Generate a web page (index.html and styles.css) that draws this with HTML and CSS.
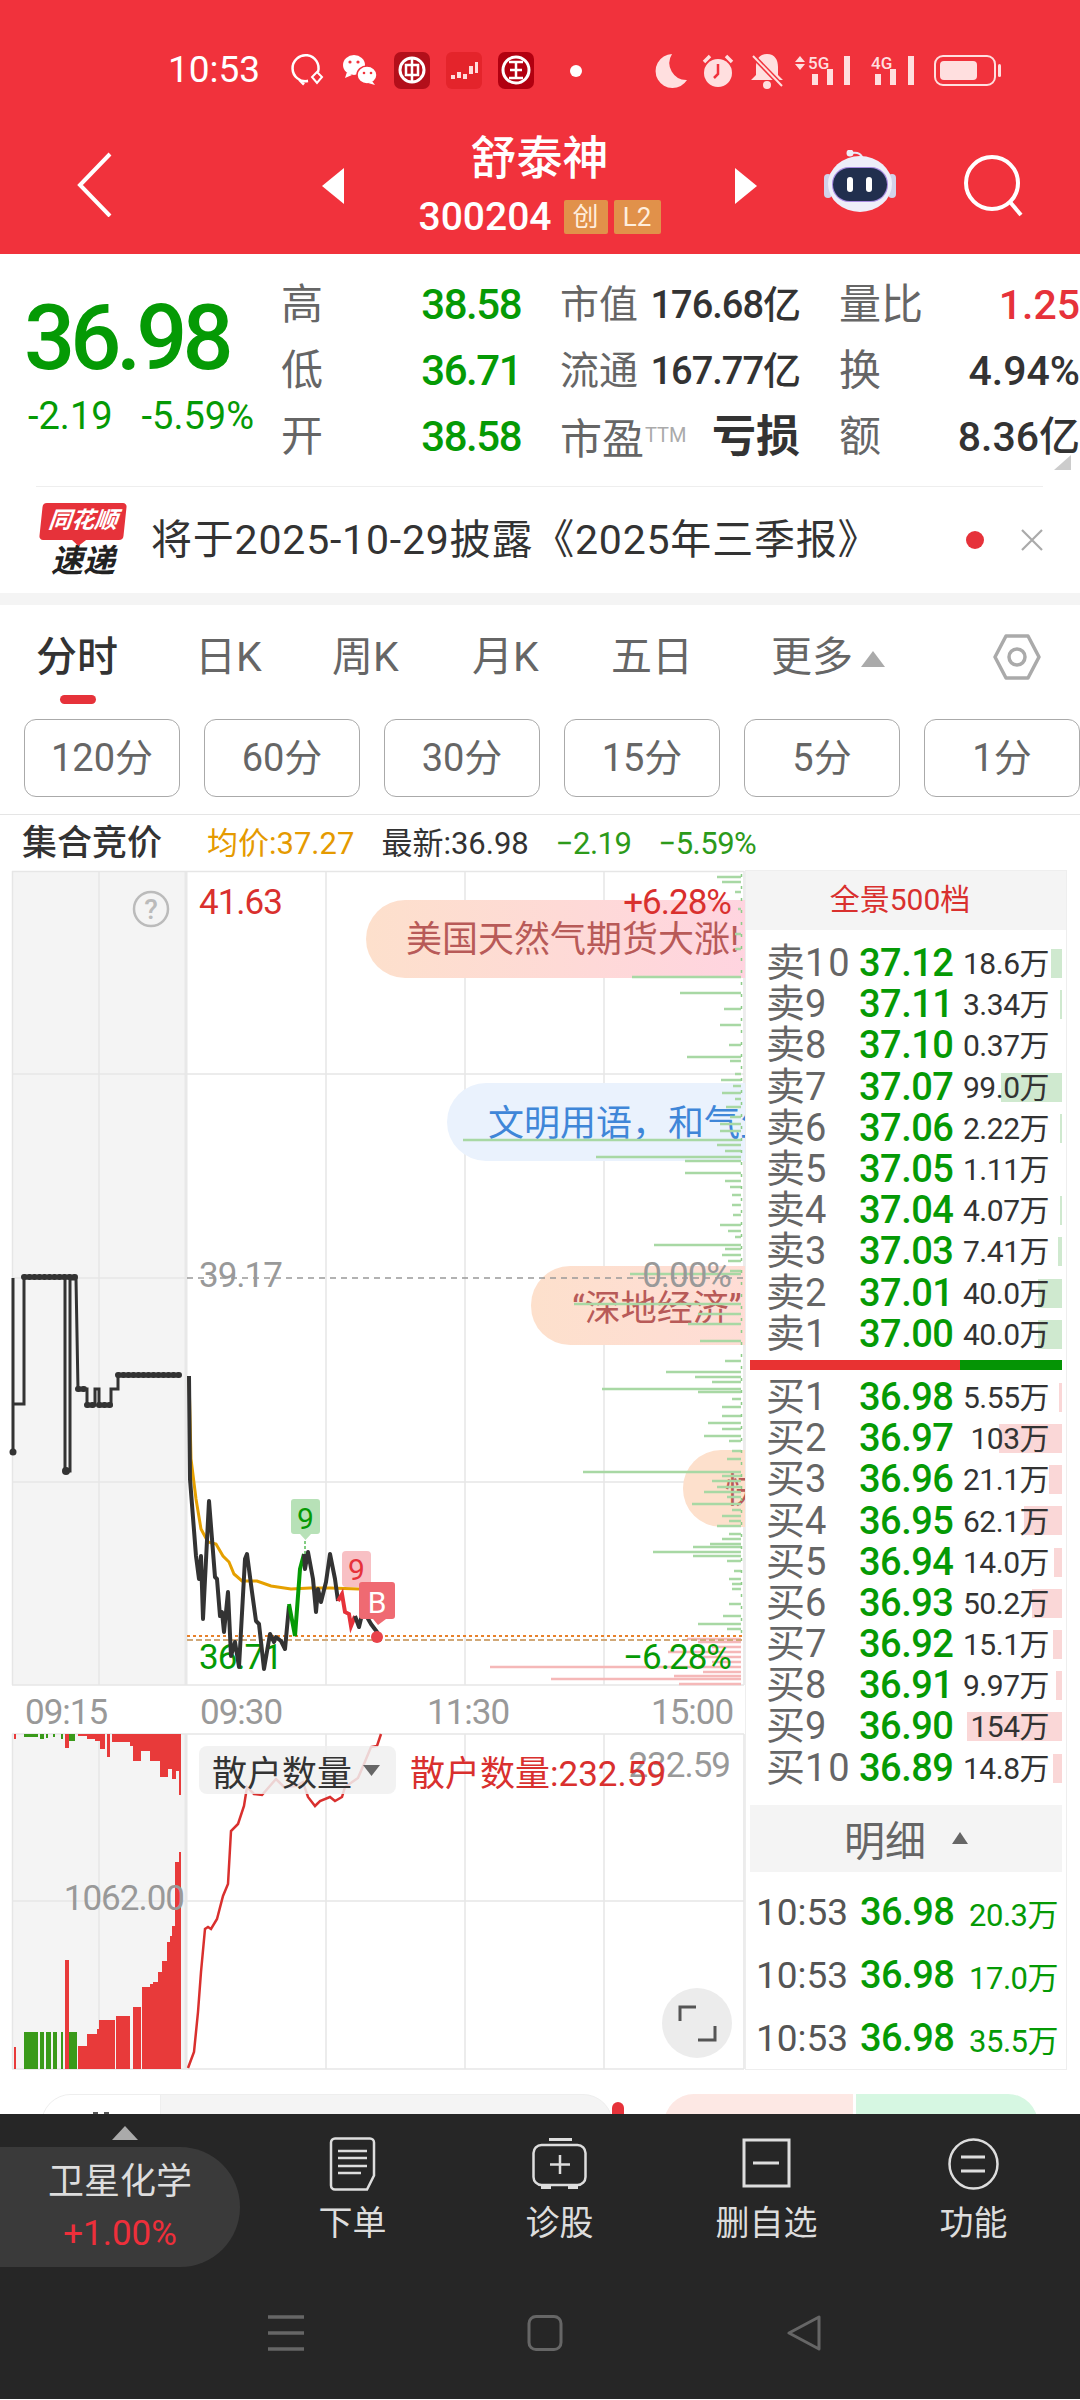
FILE: index.html
```html
<!DOCTYPE html>
<html lang="zh-CN">
<head>
    <meta charset="UTF-8">
    <meta name="viewport" content="width=device-width, initial-scale=1.0">
    <title>舒泰神 300204</title>
    <link rel="stylesheet" href="styles.css">
</head>
<body>
    <!-- Red header: status bar and stock title -->
    <header class="header">
        <div class="status">
            <span class="status-time">10:53</span>
            <svg class="status-apps" viewBox="291 50 291 40">
                <path d="M318 72a13 13 0 1 0-10 9l-7 .5 3 3" fill="none" stroke="#fff" stroke-width="2.5"/>
                <path d="M317 72l5 5-5 6-5-6z" fill="none" stroke="#fff" stroke-width="2"/>
                <ellipse cx="354" cy="65" rx="11" ry="10" fill="#fff"/>
                <path d="M347 72l-2 6 7-3z" fill="#fff"/>
                <circle cx="350" cy="62" r="1.6" fill="#f1323c"/>
                <circle cx="358" cy="62" r="1.6" fill="#f1323c"/>
                <ellipse cx="367" cy="75" rx="10" ry="9" fill="#fff" stroke="#f1323c" stroke-width="1.5"/>
                <path d="M372 81l3 4-7-2z" fill="#fff"/>
                <circle cx="364" cy="73" r="1.3" fill="#f1323c"/>
                <circle cx="371" cy="73" r="1.3" fill="#f1323c"/>
                <rect x="394" y="52" width="36" height="37" rx="7" fill="#b30f1a"/>
                <circle cx="412" cy="70" r="12" fill="none" stroke="#fff" stroke-width="3"/>
                <rect x="406" y="65" width="12" height="10" fill="none" stroke="#fff" stroke-width="2.5"/>
                <path d="M412 58v24" stroke="#fff" stroke-width="2.5"/>
                <rect x="446" y="52" width="36" height="37" rx="6" fill="#e4242b"/>
                <path d="M451 75h4v4h-4zM457 72h4v6h-4zM463 74h4v5h-4zM469 66h4v8h-4zM475 62h3v11h-3z" fill="#ffdcdc"/>
                <rect x="498" y="52" width="36" height="37" rx="7" fill="#b10010"/>
                <circle cx="516" cy="70" r="13" fill="none" stroke="#fff" stroke-width="3"/>
                <path d="M509 62h14M509 78h14M516 62v16M510 70h12" stroke="#fff" stroke-width="2.5" fill="none"/>
                <circle cx="576" cy="71" r="6" fill="#fff"/>
            </svg>
            <svg class="status-sys" viewBox="654 50 348 40">
                <path d="M672 54a17 17 0 1 0 15 26 17 17 0 0 1-15-26z" fill="#ffdfdf"/>
                <circle cx="718" cy="73" r="14" fill="#ffdfdf"/>
                <path d="M704 62l6-6M732 62l-6-6" stroke="#ffdfdf" stroke-width="3.5"/>
                <path d="M718 64v10l-4 4" stroke="#f1323c" stroke-width="2.5" fill="none"/>
                <path d="M767 54c-8 0-11 6-11 13v8l-5 5h32l-5-5v-8c0-7-3-13-11-13z" fill="#ffdfdf"/>
                <circle cx="767" cy="85" r="4" fill="#ffdfdf"/>
                <path d="M753 56l29 30" stroke="#f1323c" stroke-width="5"/>
                <path d="M753 56l29 30" stroke="#ffdfdf" stroke-width="2"/>
                <path d="M800 56l5 6h-10zM800 70l5-6h-10z" fill="#ffdfdf"/>
                <text class="net-text" x="808" y="69">5G</text>
                <path d="M812 74h6v11h-6zM827 69h6v16h-6zM844 56h6v29h-6z" fill="#ffdfdf"/>
                <text class="net-text" x="871" y="69">4G</text>
                <path d="M875 74h6v11h-6zM890 69h6v16h-6zM908 56h6v29h-6z" fill="#ffdfdf"/>
                <rect x="935" y="56" width="60" height="29" rx="8" fill="none" stroke="#ffdfdf" stroke-width="2"/>
                <rect x="940" y="61" width="37" height="19" rx="4" fill="#ffdfdf"/>
                <rect x="998" y="64" width="3" height="13" rx="1.5" fill="#ffdfdf"/>
            </svg>
        </div>
        <div class="titlebar">
            <svg class="back" viewBox="0 0 35 65"><path d="M33 2L3 33l30 31" fill="none" stroke="#fff" stroke-width="4"/></svg>
            <span class="arrow arrow-left"></span>
            <div class="title">
                <div class="title-name">舒泰神</div>
                <div class="title-code">300204<span class="tag tag-first">创</span><span class="tag">L2</span></div>
            </div>
            <span class="arrow arrow-right"></span>
            <svg class="robot" viewBox="0 0 72 68">
                <path d="M28 3c6-1 10 1 11 7" fill="none" stroke="#e8e8f5" stroke-width="2"/>
                <circle cx="26" cy="3" r="3.5" fill="#eeeef8"/>
                <rect x="0" y="24" width="8" height="24" rx="4" fill="#d2d2ea"/>
                <rect x="64" y="24" width="8" height="24" rx="4" fill="#d2d2ea"/>
                <ellipse cx="36" cy="34" rx="32" ry="28" fill="#eeeef9"/>
                <rect x="8" y="17" width="56" height="35" rx="17" fill="#a78be0"/>
                <rect x="9" y="18" width="54" height="33" rx="16.5" fill="#212f4e"/>
                <rect x="23" y="27" width="6" height="15" rx="3" fill="#fff"/>
                <rect x="42" y="27" width="6" height="15" rx="3" fill="#fff"/>
            </svg>
            <svg class="search" viewBox="0 0 60 62">
                <circle cx="28" cy="28" r="26" fill="none" stroke="#fff" stroke-width="4"/>
                <path d="M46 47l11 13" stroke="#fff" stroke-width="4"/>
            </svg>
        </div>
    </header>

    <!-- Quote summary -->
    <section class="quote">
        <div class="quote-price">
            <div class="price-big">36.98</div>
            <div class="price-change"><span>-2.19</span><span>-5.59%</span></div>
        </div>
        <div class="stats">
            <div class="stat"><span class="stat-name">高</span><b class="green">38.58</b></div>
            <div class="stat"><span class="stat-name stat-name-sm">市值</span><b>176.68亿</b></div>
            <div class="stat"><span class="stat-name">量比</span><b class="red wide">1.25</b></div>
            <div class="stat"><span class="stat-name">低</span><b class="green">36.71</b></div>
            <div class="stat"><span class="stat-name stat-name-sm">流通</span><b>167.77亿</b></div>
            <div class="stat"><span class="stat-name">换</span><b class="wide">4.94%</b></div>
            <div class="stat"><span class="stat-name">开</span><b class="green">38.58</b></div>
            <div class="stat"><span class="stat-name">市盈<span class="ttm">TTM</span></span><b class="loss">亏损</b></div>
            <div class="stat"><span class="stat-name">额</span><b class="wide">8.36亿</b></div>
        </div>
        <span class="corner"></span>
    </section>

    <section class="news">
        <div class="news-logo">
            <div class="logo-top">同花顺</div>
            <div class="logo-bottom">速递</div>
        </div>
        <div class="news-text">将于2025-10-29披露《2025年三季报》</div>
        <span class="news-dot"></span>
        <svg class="news-close" viewBox="0 0 22 22"><path d="M1 1l20 20M21 1L1 21" stroke="#aaa" stroke-width="2.2"/></svg>
    </section>

    <!-- Period tabs -->
    <nav class="tabs">
        <span class="tab tab-active">分时</span>
        <span class="tab">日K</span>
        <span class="tab">周K</span>
        <span class="tab">月K</span>
        <span class="tab">五日</span>
        <span class="tab">更多<i class="tab-more"></i></span>
        <svg class="tab-gear" viewBox="0 0 48 46">
            <path d="M13 2h22l11 21-11 21H13L2 23z" fill="none" stroke="#aaa" stroke-width="3.5" stroke-linejoin="round"/>
            <circle cx="24" cy="23" r="8" fill="none" stroke="#aaa" stroke-width="3.5"/>
        </svg>
    </nav>
    <div class="periods">
        <span class="period">120分</span>
        <span class="period">60分</span>
        <span class="period">30分</span>
        <span class="period">15分</span>
        <span class="period">5分</span>
        <span class="period">1分</span>
    </div>

    <div class="info">
        <span class="info-title">集合竞价</span>
        <span class="info-avg">均价:37.27</span>
        <span class="info-last">最新:36.98</span>
        <span class="info-down">−2.19</span>
        <span class="info-down">−5.59%</span>
    </div>

    <main class="market">
        <!-- Intraday chart drawn on page coordinates -->
        <svg class="chart" viewBox="0 871 745 1200">
            <defs>
                <linearGradient id="bubbleWarm" x1="0" x2="1" y1="0" y2="0">
                    <stop offset="0" stop-color="#fde0cc"/>
                    <stop offset="1" stop-color="#ffd3e2"/>
                </linearGradient>
                <linearGradient id="bubbleSoft" x1="0" x2="1" y1="0" y2="0">
                    <stop offset="0" stop-color="#fde0cc"/>
                    <stop offset="1" stop-color="#ffdcd8"/>
                </linearGradient>
            </defs>

            <rect x="12" y="872" width="175" height="814" fill="#f4f4f4"/>
            <rect x="12" y="1735" width="175" height="335" fill="#f4f4f4"/>
            <path class="grid-thick" d="M186 872V1686M186 1735V2070"/>
            <path class="grid" d="M12.5 872V1686M12.5 1735V2070M99 872V1686M99 1735V2070M326 872V1686M326 1735V2070M465 872V1686M465 1735V2070M604 872V1686M604 1735V2070M744 872V1686M744 1735V2070"/>
            <path class="grid" d="M12 872.5H744M12 1075H744M12 1279H187M12 1483H744M12 1686H744M12 1735H744M12 1902H744M12 2070H744"/>

            <rect x="366" y="901" width="420" height="78" rx="39" fill="url(#bubbleWarm)"/>
            <text class="bubble-red" x="406" y="953">美国天然气期货大涨!</text>
            <rect x="447" y="1084" width="340" height="78" rx="39" fill="#eaf2fd"/>
            <text class="bubble-blue" x="488" y="1137">文明用语，和气生财</text>
            <rect x="531" y="1267" width="260" height="79" rx="39" fill="url(#bubbleSoft)"/>
            <text class="bubble-red" x="572" y="1322">“深地经济”</text>
            <rect x="683" y="1451" width="120" height="77" rx="38" fill="#fde0cc"/>
            <text class="bubble-red" x="725" y="1504">快讯</text>

            <!-- Volume at price -->
            <path class="depth-green" d="M741 878H717M741 883H722M741 893H735M741 910H738M741 935H735M741 950H735M741 978H632M741 994H680M741 1010H724M741 1026H720M741 1046H729M741 1058H687M741 1062H730M741 1075H735M741 1081H721M741 1087H733M741 1094H722M741 1100H735M741 1108H726M741 1118H730M741 1125H720M741 1132H720M741 1141H463M741 1146H717M741 1152H725M741 1158H596M741 1162H685M741 1174H685M741 1182H725M741 1188H730M741 1196H732M741 1206H732M741 1216H733M741 1226H720M741 1232H728M741 1238H735M741 1246H654M741 1250H725M741 1256H722M741 1262H728M741 1272H730M741 1275H630M741 1305H574M741 1315H698M741 1325H688M741 1342H700M741 1362H725M741 1373H666M741 1378H695M741 1383H712M741 1390H602M741 1393H698M741 1400H732M741 1408H722M741 1417H722M741 1424H708M741 1430H722M741 1437H704M741 1442H729M741 1452H732M741 1460H727M741 1473H583M741 1477H722M741 1482H712M741 1488H717M741 1493H704M741 1498H727M741 1505H692M741 1511H732M741 1517H722M741 1522H729M741 1527H717M741 1535H729M741 1540H722M741 1545H710M741 1548H693M741 1553H653M741 1557H693M741 1562H727M741 1572H734M741 1580H729M741 1585H732M741 1590H732M741 1605H729M741 1617H723M741 1625H698M741 1630H727"/>
            <path class="depth-red" d="M741 1640H687M741 1643H698M741 1648H712M741 1653H668M741 1658H698M741 1663H712M741 1668H490M741 1673H703M741 1677H674M741 1680H551M741 1685H679"/>
            <path class="depth-dash" d="M741.5 875V1640"/>

            <path class="ref-line" d="M187 1279H744"/>
            <path class="ref-dots" d="M187 1637H744"/>
            <path class="ref-tan" d="M187 1641H744"/>

            <text class="axis-red" x="199" y="915">41.63</text>
            <text class="axis-red axis-end" x="731" y="915">+6.28%</text>
            <text class="axis-gray" x="199" y="1288">39.17</text>
            <text class="axis-gray axis-end" x="731" y="1288">0.00%</text>
            <text class="axis-green" x="199" y="1670">36.71</text>
            <text class="axis-green axis-end" x="731" y="1670">−6.28%</text>

            <circle cx="151" cy="910" r="17" fill="none" stroke="#bbb" stroke-width="2.5"/>
            <text class="help" x="151" y="920">?</text>

            <!-- Auction and session price lines -->
            <path class="line-auction" d="M13 1453V1279M13 1453V1405H24V1278H65V1472H70V1280H76L78 1390H87V1406H95V1390H99V1406H111V1390H118V1376H180"/>
            <path class="line-auction-dots" d="M24 1278H76M78 1390H87M87 1406H95M99 1406H111M118 1376H180"/>
            <circle cx="13" cy="1453" r="3.5" fill="#333"/>
            <circle cx="66" cy="1472" r="4" fill="#333"/>
            <polyline class="line-avg" points="189,1377 191,1460 196,1500 201,1530 208,1543 216,1545 223,1557 229,1563 234,1575 242,1582 257,1582 271,1587 291,1590 310,1589 330,1589 359,1590"/>
            <polyline class="line-price" points="189,1377 190,1480 196,1557 199,1580 201,1557 203,1620 209,1502 215,1578 217,1580 220,1617 222,1613 224,1633 228,1593 231,1657 235,1643 239,1668 245,1560 247,1555 252,1593 256,1622 259,1625 264,1670 270,1635 274,1643 276,1638 281,1642 285,1650 289,1607"/>
            <polyline class="line-up" points="289,1605 295,1637 300,1570 304,1555"/>
            <polyline class="line-price" points="304,1555 305,1570 308,1553 313,1580 316,1613 318,1590 321,1603 326,1583 330,1555 335,1580 338,1602"/>
            <polyline class="line-down" points="338,1602 342,1595 345,1613 349,1615 351,1627 355,1617"/>
            <polyline class="line-price" points="355,1617 359,1628 364,1607 367,1618 371,1625 377,1633 380,1642"/>

            <path d="M305 1542V1555" stroke="#059a05" stroke-width="1" stroke-dasharray="3 2"/>
            <path d="M294 1500h23a3 3 0 0 1 3 3v29a3 3 0 0 1-3 3h-6l-5.5 6-5.5-6h-6a3 3 0 0 1-3-3v-29a3 3 0 0 1 3-3z" fill="#b7e1b7"/>
            <text class="mark-green" x="305.5" y="1530">9</text>
            <rect x="342" y="1552" width="29" height="36" rx="4" fill="#f8c0c4"/>
            <text class="mark-red" x="356.5" y="1581">9</text>
            <path d="M356 1595V1612" stroke="#fff" stroke-width="1.5" stroke-dasharray="3 2"/>
            <path d="M362 1583h30a3 3 0 0 1 3 3v31a3 3 0 0 1-3 3h-6l-8 6-5-6h-11a3 3 0 0 1-3-3v-31a3 3 0 0 1 3-3z" fill="#ef6a72"/>
            <text class="mark-white" x="377" y="1614">B</text>
            <circle cx="377" cy="1638" r="6" fill="#e8434a"/>

            <text class="axis-time" x="25" y="1725">09:15</text>
            <text class="axis-time" x="200" y="1725">09:30</text>
            <text class="axis-time" x="427" y="1725">11:30</text>
            <text class="axis-time" x="651" y="1725">15:00</text>

            <!-- Auction volume bars, lower pane -->
            <path class="bar-red" d="M14 2048h2v22h-2zM65 1961h4v109h-4zM78 2047h9v23h-9zM87 2035h10v35H87zM97 2030h2v40h-2zM99 2021h16v49H99zM116 2017h14v53h-14zM133 2008h8v62h-8zM142 1988h8v82h-8zM150 1985h3v85h-3zM153 1983h5v87h-5zM158 1973h4v97h-4zM162 1962h5v108h-5zM167 1943h3v127h-3zM170 1937h2v133h-2zM172 1927h3v143h-3zM175 1863h4v207h-4zM179 1853h2v217h-2z"/>
            <path class="bar-green" d="M24 2033h14v37H24zM40 2033h4v37h-4zM46 2033h5v37h-5zM53 2033h4v37h-4zM61 2033h2v37h-2zM69 2033h8v37h-8z"/>
            <path class="bar-red" d="M14 1735h2v5h-2zM65 1735h4v14h-4zM78 1735h9v2h-9zM87 1735h8v5h-8zM95 1735h5v7h-5zM100 1735h5v15h-5zM107 1735h3v23h-3zM112 1735h18v8h-18zM130 1735h3v12h-3zM133 1735h8v27h-8zM141 1735h9v17h-9zM150 1735h10v27h-10zM160 1735h8v43h-8zM168 1735h4v35h-4zM172 1735h4v45h-4zM176 1735h3v37h-3zM179 1735h2v61h-2z"/>
            <path class="bar-green" d="M24 1735h14v3H24zM40 1735h4v5h-4zM46 1735h2v4h-2zM53 1735h2v3h-2zM61 1735h2v5h-2zM69 1735h6v7h-6z"/>
            <polyline class="line-turnover" points="188,2069 194,2053 198,2013 201,1973 205,1930 208,1928 211,1930 217,1920 223,1897 228,1885 231,1832 238,1825 244,1807 247,1788 254,1795 262,1796 269,1788 276,1780 284,1788 296,1787 303,1783 308,1798 315,1807 320,1802 330,1798 335,1802 342,1798 345,1788 358,1779 364,1765 371,1748 377,1747 381,1735"/>

            <rect x="199" y="1747" width="197" height="48" rx="8" fill="#f0f0f0" fill-opacity="0.85"/>
            <text class="pane-select" x="212" y="1787">散户数量</text>
            <path d="M363 1766h17l-8.5 11z" fill="#666"/>
            <text class="axis-gray axis-end" x="730" y="1778">232.59</text>
            <text class="pane-value" x="410" y="1787">散户数量:232.59</text>
            <text class="axis-gray axis-end" x="184" y="1911">1062.00</text>

            <circle cx="697" cy="2024" r="35" fill="#ececec"/>
            <path d="M680 2022V2008H696M715 2027V2041H698" fill="none" stroke="#555" stroke-width="3"/>
        </svg>

        <!-- Order book -->
        <aside class="book">
            <div class="book-head">全景500档</div>
            <div class="levels">
                <div class="level"><i class="fill fill-sell" style="width:11px"></i><span class="level-name">卖<em>10</em></span><span class="level-price">37.12</span><span class="level-vol">18.6万</span></div>
                <div class="level"><i class="fill fill-sell" style="width:2px"></i><span class="level-name">卖<em>9</em></span><span class="level-price">37.11</span><span class="level-vol">3.34万</span></div>
                <div class="level"><span class="level-name">卖<em>8</em></span><span class="level-price">37.10</span><span class="level-vol">0.37万</span></div>
                <div class="level"><i class="fill fill-sell" style="width:61px"></i><span class="level-name">卖<em>7</em></span><span class="level-price">37.07</span><span class="level-vol">99.0万</span></div>
                <div class="level"><i class="fill fill-sell" style="width:2px"></i><span class="level-name">卖<em>6</em></span><span class="level-price">37.06</span><span class="level-vol">2.22万</span></div>
                <div class="level"><span class="level-name">卖<em>5</em></span><span class="level-price">37.05</span><span class="level-vol">1.11万</span></div>
                <div class="level"><i class="fill fill-sell" style="width:2px"></i><span class="level-name">卖<em>4</em></span><span class="level-price">37.04</span><span class="level-vol">4.07万</span></div>
                <div class="level"><i class="fill fill-sell" style="width:4px"></i><span class="level-name">卖<em>3</em></span><span class="level-price">37.03</span><span class="level-vol">7.41万</span></div>
                <div class="level"><i class="fill fill-sell" style="width:24px"></i><span class="level-name">卖<em>2</em></span><span class="level-price">37.01</span><span class="level-vol">40.0万</span></div>
                <div class="level"><i class="fill fill-sell" style="width:24px"></i><span class="level-name">卖<em>1</em></span><span class="level-price">37.00</span><span class="level-vol">40.0万</span></div>
            </div>
            <div class="split"><span class="split-buy" style="width:210px"></span><span class="split-sell"></span></div>
            <div class="levels levels-buy">
                <div class="level"><i class="fill fill-buy" style="width:3px"></i><span class="level-name">买<em>1</em></span><span class="level-price">36.98</span><span class="level-vol">5.55万</span></div>
                <div class="level"><i class="fill fill-buy" style="width:63px"></i><span class="level-name">买<em>2</em></span><span class="level-price">36.97</span><span class="level-vol">103万</span></div>
                <div class="level"><i class="fill fill-buy" style="width:13px"></i><span class="level-name">买<em>3</em></span><span class="level-price">36.96</span><span class="level-vol">21.1万</span></div>
                <div class="level"><i class="fill fill-buy" style="width:38px"></i><span class="level-name">买<em>4</em></span><span class="level-price">36.95</span><span class="level-vol">62.1万</span></div>
                <div class="level"><i class="fill fill-buy" style="width:8px"></i><span class="level-name">买<em>5</em></span><span class="level-price">36.94</span><span class="level-vol">14.0万</span></div>
                <div class="level"><i class="fill fill-buy" style="width:30px"></i><span class="level-name">买<em>6</em></span><span class="level-price">36.93</span><span class="level-vol">50.2万</span></div>
                <div class="level"><i class="fill fill-buy" style="width:9px"></i><span class="level-name">买<em>7</em></span><span class="level-price">36.92</span><span class="level-vol">15.1万</span></div>
                <div class="level"><i class="fill fill-buy" style="width:6px"></i><span class="level-name">买<em>8</em></span><span class="level-price">36.91</span><span class="level-vol">9.97万</span></div>
                <div class="level"><i class="fill fill-buy" style="width:95px"></i><span class="level-name">买<em>9</em></span><span class="level-price">36.90</span><span class="level-vol">154万</span></div>
                <div class="level"><i class="fill fill-buy" style="width:9px"></i><span class="level-name">买<em>10</em></span><span class="level-price">36.89</span><span class="level-vol">14.8万</span></div>
            </div>
            <div class="detail-head">明细<i class="detail-arrow"></i></div>
            <div class="trades">
                <div class="trade"><span class="trade-time">10:53</span><span class="trade-price">36.98</span><span class="trade-vol">20.3万</span></div>
                <div class="trade"><span class="trade-time">10:53</span><span class="trade-price">36.98</span><span class="trade-vol">17.0万</span></div>
                <div class="trade"><span class="trade-time">10:53</span><span class="trade-price">36.98</span><span class="trade-vol">35.5万</span></div>
            </div>
        </aside>
    </main>

    <!-- Top edge of the panel scrolled under the dock -->
    <div class="peek">
        <div class="peek-pill"><div class="peek-left"><i></i><i></i></div></div>
        <span class="peek-dot"></span>
        <span class="peek-buy"></span>
        <span class="peek-sell"></span>
    </div>

    <footer class="dock">
        <div class="dock-row">
            <div class="stock-switch">
                <span class="stock-arrow"></span>
                <div class="stock-pill">
                    <div class="stock-name">卫星化学</div>
                    <div class="stock-rate">+1.00%</div>
                </div>
            </div>
            <div class="actions">
                <div class="action">
                    <svg class="action-icon" viewBox="0 0 55 54">
                        <path d="M10 1.5h35a4 4 0 0 1 4 4v33l-7 14H10a4 4 0 0 1-4-4v-43a4 4 0 0 1 4-4z" fill="none" stroke="#ddd" stroke-width="2.5"/>
                        <path d="M13 14h29M13 21h29M13 29h29M13 36h23" stroke="#ddd" stroke-width="2.5"/>
                    </svg>
                    <span>下单</span>
                </div>
                <div class="action">
                    <svg class="action-icon" viewBox="0 0 55 54">
                        <path d="M17 2.5h23" stroke="#ddd" stroke-width="3"/>
                        <rect x="1.5" y="8" width="52" height="40" rx="8" fill="none" stroke="#ddd" stroke-width="2.5"/>
                        <path d="M18 27.5h20M28 18v19" stroke="#ddd" stroke-width="2.5"/>
                        <path d="M9 48h10v4H9zM36 48h10v4H36z" fill="#ddd"/>
                    </svg>
                    <span>诊股</span>
                </div>
                <div class="action">
                    <svg class="action-icon" viewBox="0 0 55 54">
                        <rect x="5" y="3" width="45" height="46" fill="none" stroke="#ddd" stroke-width="3"/>
                        <path d="M14 26h26" stroke="#ddd" stroke-width="3"/>
                    </svg>
                    <span>删自选</span>
                </div>
                <div class="action">
                    <svg class="action-icon" viewBox="0 0 55 54">
                        <ellipse cx="27.5" cy="27" rx="24" ry="24.5" fill="none" stroke="#ddd" stroke-width="2.5"/>
                        <path d="M15 20h24M15 34h24" stroke="#ddd" stroke-width="3"/>
                    </svg>
                    <span>功能</span>
                </div>
            </div>
        </div>
        <div class="sysnav">
            <svg class="sys-icon" viewBox="0 0 36 36"><path d="M0 2h36M0 18h36M0 34h36" stroke="#666" stroke-width="3.5"/></svg>
            <svg class="sys-icon" viewBox="0 0 36 36"><rect x="2" y="1.5" width="32" height="33" rx="7" fill="none" stroke="#666" stroke-width="3"/></svg>
            <svg class="sys-icon" viewBox="0 0 36 36"><path d="M33 2v32L3 18z" fill="none" stroke="#666" stroke-width="3" stroke-linejoin="round"/></svg>
        </div>
    </footer>
</body>
</html>
```

FILE: styles.css
```css
* {
    box-sizing: border-box;
}

html, body {
    margin: 0;
    padding: 0;
}

body {
    width: 1080px;
    height: 2400px;
    overflow: hidden;
    background: #fff;
    color: #333;
    font-family: Roboto, "Noto Sans CJK SC", sans-serif;
}

svg {
    display: block;
    flex: none;
}

/* Header */
.header {
    height: 254px;
    background: #f1323c;
    color: #fff;
}

.status {
    display: flex;
    align-items: center;
    height: 110px;
    padding: 30px 0 0 168px;
}

.status-time {
    width: 123px;
    font-size: 37px;
    line-height: 40px;
}

.status-apps {
    width: 291px;
    height: 40px;
}

.status-sys {
    width: 348px;
    height: 40px;
    margin-left: 72px;
}

.net-text {
    fill: #ffdfdf;
    font-size: 17px;
    font-weight: 500;
}

.titlebar {
    display: flex;
    height: 144px;
    padding-left: 77px;
    align-items: flex-start;
}

.back {
    width: 35px;
    height: 65px;
    margin-top: 42px;
}

.arrow {
    width: 0;
    height: 0;
    margin-top: 58px;
    border-top: 18px solid transparent;
    border-bottom: 18px solid transparent;
}

.arrow-left {
    margin-left: 210px;
    border-right: 22px solid #fff;
}

.arrow-right {
    border-left: 22px solid #fff;
}

.title {
    width: 391px;
    text-align: center;
}

.title-name {
    margin-top: 22px;
    font-size: 46px;
    line-height: 52px;
    font-weight: 500;
}

.title-code {
    display: flex;
    justify-content: center;
    align-items: center;
    margin-top: 15px;
    font-size: 39px;
    line-height: 36px;
    font-weight: 500;
}

.tag {
    width: 47px;
    height: 34px;
    margin-left: 6px;
    border-radius: 2px;
    background: #e1914a;
    color: #ffeedd;
    font-size: 26px;
    line-height: 34px;
    font-weight: 400;
}

.tag-first {
    width: 44px;
    margin-left: 12px;
}

.robot {
    width: 72px;
    height: 68px;
    margin: 40px 0 0 67px;
}

.search {
    width: 60px;
    height: 62px;
    margin: 45px 0 0 68px;
}

/* Quote */
.quote {
    position: relative;
    display: flex;
    height: 231px;
    padding-top: 18px;
}

.quote-price {
    width: 281px;
    padding-left: 24px;
}

.price-big {
    margin-top: 22px;
    font-size: 90px;
    line-height: 90px;
    font-weight: 500;
    color: #059a05;
    letter-spacing: -5px;
}

.price-change {
    display: flex;
    gap: 29px;
    margin-top: 12px;
    padding-left: 4px;
    font-size: 38px;
    line-height: 40px;
    color: #059a05;
    white-space: nowrap;
}

.stats {
    display: grid;
    grid-template-columns: 240px 240px 241px;
    grid-auto-rows: 66px;
    column-gap: 39px;
}

.stat {
    display: flex;
    justify-content: space-between;
    align-items: center;
    white-space: nowrap;
}

.stat-name {
    color: #666;
    font-size: 42px;
    line-height: 48px;
}

.stat-name-sm {
    font-size: 39px;
}

.stat b {
    font-size: 38px;
    line-height: 48px;
    font-weight: 500;
    letter-spacing: -1px;
}

.stat .green {
    font-size: 42px;
    color: #059a05;
    letter-spacing: -1.5px;
}

.stat .wide {
    font-size: 41px;
    letter-spacing: 0;
}

.stat .red {
    color: #e6323a;
}

.stat .loss {
    font-weight: 700;
    letter-spacing: 0;
    font-size: 44px;
}

.ttm {
    margin-left: 1px;
    font-size: 20px;
    color: #aaa;
    vertical-align: 12px;
}

.corner {
    position: absolute;
    top: 201px;
    left: 1054px;
    border-left: 17px solid transparent;
    border-bottom: 15px solid #ccc;
}

/* News strip */
.news {
    display: flex;
    align-items: center;
    height: 108px;
    padding-left: 41px;
    border-top: 1px solid transparent;
    background: linear-gradient(#eee, #eee) 36px 0 / 1007px 1px no-repeat;
}

.news-logo {
    width: 84px;
    text-align: center;
    font-style: italic;
    font-weight: 700;
}

.logo-top {
    position: relative;
    height: 37px;
    border-radius: 4px;
    background: #e6323a;
    color: #fff;
    font-size: 23px;
    line-height: 36px;
    transform: skewX(-6deg);
}

.logo-top::after {
    content: "";
    position: absolute;
    left: 33px;
    top: 37px;
    border-left: 7px solid transparent;
    border-right: 7px solid transparent;
    border-top: 6px solid #e6323a;
}

.logo-bottom {
    margin-top: 6px;
    font-size: 32px;
    line-height: 30px;
    color: #222;
}

.news-text {
    width: 815px;
    margin-left: 26px;
    font-size: 41px;
    line-height: 48px;
    letter-spacing: 0.8px;
    white-space: nowrap;
}

.news-dot {
    width: 18px;
    height: 18px;
    border-radius: 50%;
    background: #e6323a;
}

.news-close {
    width: 22px;
    height: 22px;
    margin-left: 37px;
}

/* Tabs */
.tabs {
    display: grid;
    grid-template-columns: 159px 137px 140px 139px 160px 222px auto;
    align-items: center;
    height: 126px;
    padding: 29px 0 0 36px;
    border-top: 12px solid #f4f4f4;
    align-content: start;
    color: #666;
    font-size: 41px;
    line-height: 40px;
}

.tab {
    position: relative;
    white-space: nowrap;
}

.tab-active {
    color: #333;
    font-weight: 500;
}

.tab-active::after {
    content: "";
    position: absolute;
    left: 24px;
    top: 58px;
    width: 36px;
    height: 9px;
    border-radius: 5px;
    background: #e6323a;
}

.tab-more {
    display: inline-block;
    margin-left: 8px;
    border-left: 12px solid transparent;
    border-right: 12px solid transparent;
    border-bottom: 16px solid #aaa;
    vertical-align: 4px;
}

.tab-gear {
    width: 48px;
    height: 46px;
}

.periods {
    display: flex;
    gap: 24px;
    height: 96px;
    padding-left: 24px;
    border-bottom: 1px solid #e5e5e5;
}

.period {
    width: 156px;
    height: 78px;
    border: 1px solid #aaa;
    border-radius: 12px;
    color: #666;
    font-size: 38px;
    line-height: 76px;
    text-align: center;
}

/* Chart caption */
.info {
    display: flex;
    align-items: center;
    gap: 27px;
    height: 55px;
    padding: 3px 0 0 22px;
    font-size: 31px;
    line-height: 40px;
    white-space: nowrap;
}

.info-title {
    margin-right: 18px;
    font-size: 35px;
    font-weight: 500;
}

.info-avg {
    color: #e59a00;
}

.info-down {
    color: #2c9a1a;
    letter-spacing: -0.5px;
}

/* Market area */
.market {
    display: flex;
    height: 1200px;
}

.chart {
    width: 745px;
    height: 1200px;
    font-weight: 500;
}

.grid {
    stroke: #e6e6e6;
    stroke-width: 1.5;
    fill: none;
}

.grid-thick {
    stroke: #e8e8e8;
    stroke-width: 3;
    fill: none;
}

.bubble-red {
    fill: #b85a58;
    font-size: 36px;
    font-weight: 400;
}

.bubble-blue {
    fill: #3f86d8;
    font-size: 36px;
    font-weight: 400;
}

.depth-green {
    stroke: #a8d8a4;
    stroke-width: 2.5;
    fill: none;
}

.depth-red {
    stroke: #f5b8b8;
    stroke-width: 2.5;
    fill: none;
}

.depth-dash {
    stroke: #8ccc88;
    stroke-width: 1.5;
    stroke-dasharray: 3 9;
    fill: none;
}

.ref-line {
    stroke: #999;
    stroke-width: 1.5;
    stroke-dasharray: 6 5;
    fill: none;
}

.ref-dots {
    stroke: #e8812a;
    stroke-width: 2;
    stroke-dasharray: 3 3;
    fill: none;
}

.ref-tan {
    stroke: #d0a878;
    stroke-width: 2;
    stroke-dasharray: 6 3;
    fill: none;
}

.axis-red,
.axis-gray,
.axis-green,
.axis-time {
    font-size: 35px;
    font-weight: 400;
    letter-spacing: -1px;
}

.axis-red {
    fill: #d9302e;
}

.axis-gray {
    fill: #999;
}

.axis-green {
    fill: #059a05;
}

.axis-time {
    fill: #999;
}

.axis-end {
    text-anchor: end;
}

.help {
    fill: #bbb;
    font-size: 28px;
    text-anchor: middle;
}

.line-auction {
    stroke: #333;
    stroke-width: 3;
    fill: none;
}

.line-auction-dots {
    stroke: #333;
    stroke-width: 6;
    stroke-linecap: round;
    stroke-dasharray: 1 4;
    fill: none;
}

.line-avg {
    stroke: #e5a000;
    stroke-width: 3;
    fill: none;
}

.line-price {
    stroke: #333;
    stroke-width: 4;
    stroke-linejoin: round;
    fill: none;
}

.line-up {
    stroke: #059a05;
    stroke-width: 4;
    fill: none;
}

.line-down {
    stroke: #e6323a;
    stroke-width: 4;
    fill: none;
}

.mark-green,
.mark-red,
.mark-white {
    font-size: 30px;
    font-weight: 400;
    text-anchor: middle;
}

.mark-green {
    fill: #059a05;
}

.mark-red {
    fill: #e6323a;
}

.mark-white {
    fill: #fff;
}

.bar-red {
    fill: #e83a3a;
}

.bar-green {
    fill: #3a9a1a;
}

.line-turnover {
    stroke: #d9302e;
    stroke-width: 2.5;
    fill: none;
}

.pane-select {
    fill: #333;
    font-size: 35px;
    font-weight: 400;
}

.pane-value {
    fill: #d9302e;
    font-size: 35px;
    font-weight: 400;
}

/* Order book */
.book {
    width: 322px;
    height: 1200px;
    border: 1px solid #eee;
    overflow: hidden;
}

.book-head {
    height: 59px;
    padding-right: 12px;
    background: #f4f4f4;
    color: #d9302e;
    font-size: 30px;
    line-height: 58px;
    text-align: center;
}

.levels {
    padding-top: 13px;
}

.levels-buy {
    padding-top: 7px;
}

.level {
    position: relative;
    display: flex;
    align-items: center;
    height: 41.2px;
    padding: 0 17px 0 20px;
    white-space: nowrap;
}

.fill {
    position: absolute;
    right: 4px;
    top: 6px;
    height: 29px;
}

.fill-sell {
    background: #cfe9cf;
}

.fill-buy {
    background: #fad7d7;
}

.level-name {
    position: relative;
    width: 93px;
    color: #666;
    font-size: 39px;
    line-height: 41px;
}

.level-name em {
    font-style: normal;
    font-size: 38px;
    letter-spacing: 2px;
}

.level-price {
    position: relative;
    color: #059a05;
    font-size: 38px;
    font-weight: 500;
    line-height: 41px;
    letter-spacing: -0.5px;
}

.level-vol {
    position: relative;
    flex: 1;
    font-size: 30px;
    line-height: 41px;
    text-align: right;
    letter-spacing: -0.5px;
}

.split {
    display: flex;
    height: 10px;
    margin: 5px 4px 0;
}

.split-buy {
    background: #e83232;
}

.split-sell {
    flex: 1;
    background: #059405;
}

.detail-head {
    display: flex;
    justify-content: center;
    align-items: center;
    height: 67px;
    margin: 16px 4px 0;
    background: #f4f4f4;
    color: #666;
    font-size: 41px;
}

.detail-arrow {
    margin-left: 26px;
    border-left: 8px solid transparent;
    border-right: 8px solid transparent;
    border-bottom: 12px solid #666;
}

.trades {
    padding-top: 9px;
}

.trade {
    display: flex;
    align-items: center;
    height: 63px;
    padding: 0 8px 0 10px;
    white-space: nowrap;
}

.trade-time {
    width: 104px;
    color: #555;
    font-size: 37px;
}

.trade-price {
    color: #059a05;
    font-size: 38px;
    font-weight: 500;
    letter-spacing: -0.5px;
}

.trade-vol {
    flex: 1;
    color: #059a05;
    font-size: 31px;
    text-align: right;
    letter-spacing: -0.5px;
}

/* Panel peeking above the dock */
.peek {
    display: flex;
    height: 44px;
    padding: 24px 0 0 41px;
    overflow: hidden;
}

.peek-pill {
    width: 572px;
    height: 60px;
    border: 1px solid #eee;
    border-radius: 30px 30px 0 0;
    background: #f4f4f4;
    overflow: hidden;
}

.peek-left {
    display: flex;
    justify-content: center;
    gap: 6px;
    width: 119px;
    height: 60px;
    padding-top: 17px;
    background: #fff;
    border-right: 1px solid #eee;
}

.peek-left i {
    width: 5px;
    height: 10px;
    background: #555;
}

.peek-dot {
    width: 12px;
    height: 20px;
    margin: 8px 0 0 -1px;
    border-radius: 6px;
    background: #e6323a;
}

.peek-buy {
    width: 189px;
    height: 60px;
    margin-left: 40px;
    border-radius: 30px 0 0 0;
    background: #fde8e4;
}

.peek-sell {
    width: 182px;
    height: 60px;
    margin-left: 3px;
    border-radius: 0 30px 0 0;
    background: #d6f7e2;
}

/* Dock */
.dock {
    height: 285px;
    background: #262626;
}

.dock-row {
    display: flex;
    height: 153px;
}

.stock-switch {
    width: 240px;
    padding-top: 12px;
}

.stock-arrow {
    display: block;
    width: 0;
    margin: 0 0 7px 112px;
    border-left: 13px solid transparent;
    border-right: 13px solid transparent;
    border-bottom: 14px solid #aaa;
}

.stock-pill {
    height: 120px;
    padding-top: 12px;
    border-radius: 0 60px 60px 0;
    background: #3a3a3a;
    text-align: center;
}

.stock-name {
    color: #ddd;
    font-size: 36px;
    line-height: 46px;
}

.stock-rate {
    margin-top: 6px;
    color: #ee2f3a;
    font-size: 35px;
    line-height: 46px;
}

.actions {
    display: grid;
    grid-template-columns: repeat(4, 207px);
    margin-left: 9px;
}

.action {
    display: flex;
    flex-direction: column;
    align-items: center;
    padding-top: 23px;
    color: #ddd;
    font-size: 34px;
    line-height: 40px;
}

.action-icon {
    width: 55px;
    height: 54px;
    margin-bottom: 12px;
}

.sysnav {
    display: flex;
    gap: 223px;
    margin-top: 48px;
    padding-left: 268px;
}

.sys-icon {
    width: 36px;
    height: 36px;
}
```
